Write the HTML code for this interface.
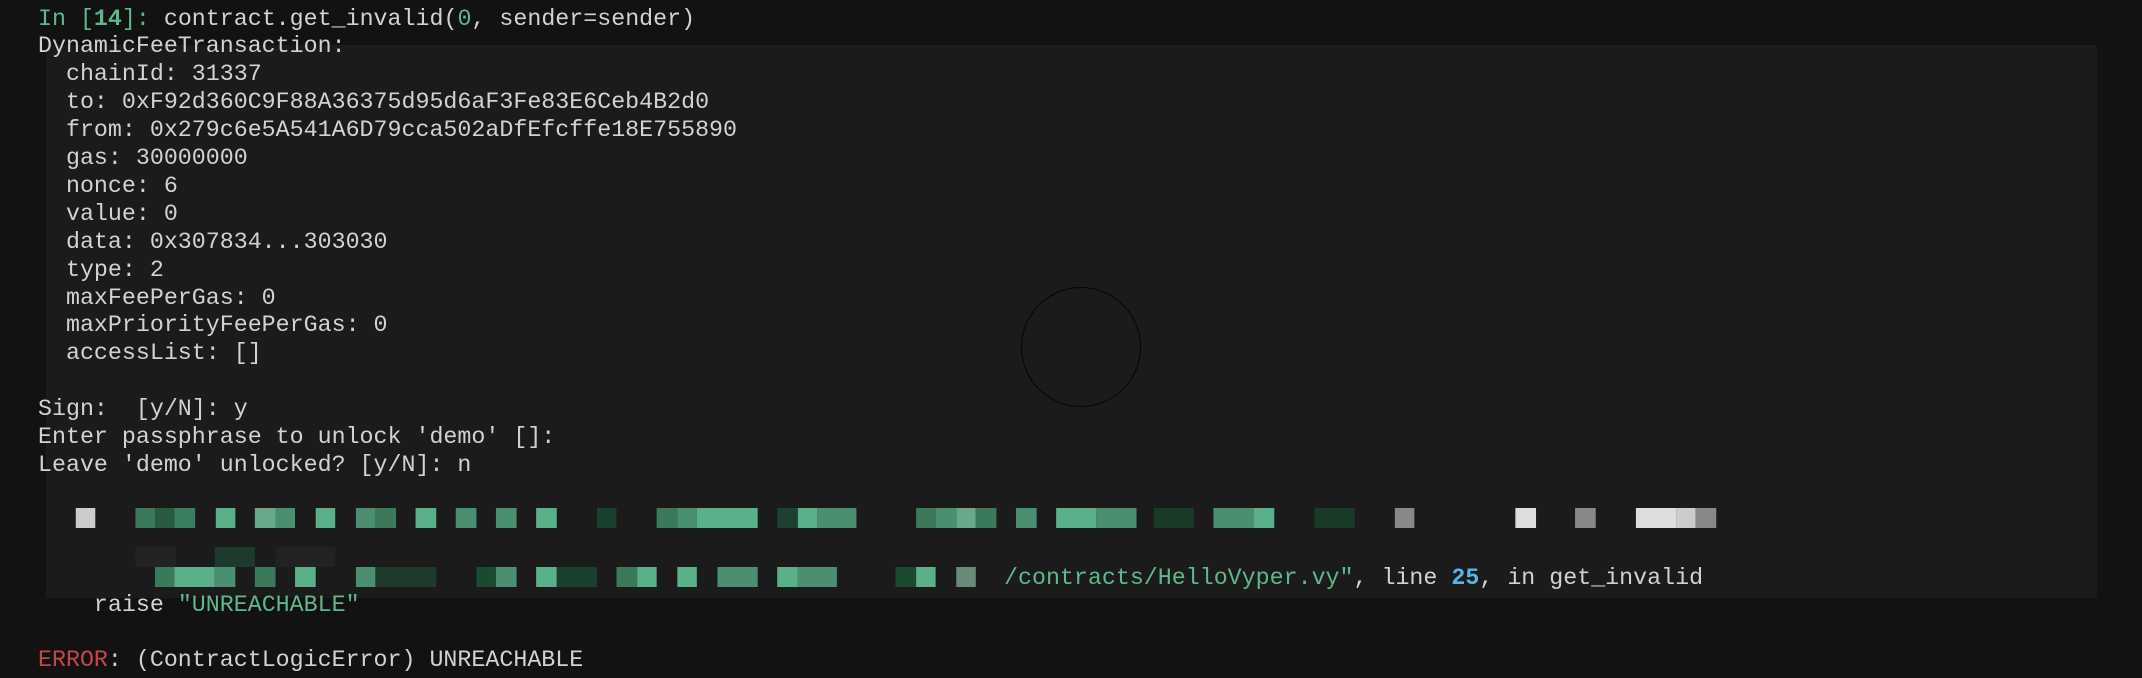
<!DOCTYPE html>
<html><head><meta charset="utf-8"><style>
html,body{margin:0;padding:0;width:2142px;height:678px;overflow:hidden;background:#121212;}
#panel{position:absolute;left:46px;top:45px;width:2051px;height:553px;background:#1b1b1b;}
.l{position:absolute;left:38px;margin:0;font-family:"Liberation Mono","DejaVu Sans Mono",monospace;font-size:23.3px;line-height:27.9px;color:#d2d2d2;white-space:pre;}
.g{color:#5fb88a}.b{color:#5ab4e4}.r{color:#c44848}
#circ{position:absolute;left:1021px;top:287px;width:118px;height:118px;border:1.5px solid #050505;border-radius:50%;}
.row{position:absolute;left:0;height:20px;transform:scaleX(1.148);transform-origin:0 0;width:1600px;}
.row i{position:absolute;top:0;height:20px;}
</style></head><body>
<div id="panel"></div>
<div id="circ"></div>
<div class="l" style="top:5.5px"><span class="g">In [</span><span class="g" style="font-weight:bold">14</span><span class="g">]:</span> contract.get_invalid(<span class="g">0</span>, sender=sender)
DynamicFeeTransaction:
  chainId: 31337
  to: 0xF92d360C9F88A36375d95d6aF3Fe83E6Ceb4B2d0
  from: 0x279c6e5A541A6D79cca502aDfEfcffe18E755890
  gas: 30000000
  nonce: 6
  value: 0
  data: 0x307834...303030
  type: 2
  maxFeePerGas: 0
  maxPriorityFeePerGas: 0
  accessList: []

Sign:  [y/N]: y
Enter passphrase to unlock 'demo' []:
Leave 'demo' unlocked? [y/N]: n
 
 
 
 
    raise <span class="g">"UNREACHABLE"</span>
 
<span class="r">ERROR</span>: (ContractLogicError) UNREACHABLE</div>
<div class="row" style="top:508px">
<i style="left:66px;width:17px;background:#ccc"></i>
<i style="left:118px;width:17px;background:#3a7a5a"></i>
<i style="left:135px;width:17px;background:#2a5a40"></i>
<i style="left:152px;width:18px;background:#3a8060"></i>
<i style="left:188px;width:17px;background:#5ab088"></i>
<i style="left:222px;width:18px;background:#6aa88a"></i>
<i style="left:240px;width:17px;background:#4a9070"></i>
<i style="left:275px;width:17px;background:#5ab088"></i>
<i style="left:310px;width:17px;background:#4a9070"></i>
<i style="left:327px;width:18px;background:#3a7a5a"></i>
<i style="left:362px;width:18px;background:#5ab088"></i>
<i style="left:397px;width:18px;background:#4a9070"></i>
<i style="left:432px;width:18px;background:#4a9070"></i>
<i style="left:467px;width:18px;background:#5ab088"></i>
<i style="left:520px;width:17px;background:#1a4030"></i>
<i style="left:572px;width:18px;background:#3a7a5a"></i>
<i style="left:590px;width:17px;background:#4a9070"></i>
<i style="left:607px;width:53px;background:#5ab088"></i>
<i style="left:677px;width:18px;background:#1e4030"></i>
<i style="left:695px;width:17px;background:#5ab088"></i>
<i style="left:712px;width:34px;background:#4a9070"></i>
<i style="left:798px;width:17px;background:#3a7a5a"></i>
<i style="left:815px;width:18px;background:#4a9070"></i>
<i style="left:833px;width:17px;background:#6aa88a"></i>
<i style="left:850px;width:18px;background:#3a7a5a"></i>
<i style="left:885px;width:18px;background:#4a9070"></i>
<i style="left:920px;width:35px;background:#5ab088"></i>
<i style="left:955px;width:35px;background:#4a9070"></i>
<i style="left:1005px;width:35px;background:#1a3a28"></i>
<i style="left:1057px;width:35px;background:#4a9070"></i>
<i style="left:1092px;width:18px;background:#5ab088"></i>
<i style="left:1145px;width:35px;background:#1a3a28"></i>
<i style="left:1215px;width:17px;background:#888"></i>
<i style="left:1320px;width:18px;background:#ddd"></i>
<i style="left:1372px;width:18px;background:#888"></i>
<i style="left:1425px;width:35px;background:#ddd"></i>
<i style="left:1460px;width:17px;background:#ccc"></i>
<i style="left:1477px;width:18px;background:#888"></i>
</div>
<div class="row" style="top:547px">
<i style="left:118px;width:35px;background:#232323"></i>
<i style="left:187px;width:35px;background:#1e3a2c"></i>
<i style="left:240px;width:52px;background:#222"></i>
</div>
<div class="row" style="top:567px">
<i style="left:135px;width:17px;background:#3a7a5a"></i>
<i style="left:152px;width:35px;background:#5ab088"></i>
<i style="left:187px;width:18px;background:#4a9070"></i>
<i style="left:222px;width:18px;background:#3a7a5a"></i>
<i style="left:257px;width:18px;background:#5ab088"></i>
<i style="left:310px;width:17px;background:#4a9070"></i>
<i style="left:327px;width:53px;background:#1e3a2c"></i>
<i style="left:415px;width:17px;background:#1a4a30"></i>
<i style="left:432px;width:18px;background:#4a9070"></i>
<i style="left:467px;width:18px;background:#5ab088"></i>
<i style="left:485px;width:35px;background:#1a4030"></i>
<i style="left:537px;width:18px;background:#3a7a5a"></i>
<i style="left:555px;width:17px;background:#5ab088"></i>
<i style="left:590px;width:17px;background:#5ab088"></i>
<i style="left:625px;width:35px;background:#4a9070"></i>
<i style="left:677px;width:18px;background:#5ab088"></i>
<i style="left:695px;width:34px;background:#4a9070"></i>
<i style="left:780px;width:18px;background:#1a4a30"></i>
<i style="left:798px;width:17px;background:#5ab088"></i>
<i style="left:833px;width:17px;background:#6a8a7a"></i>
</div>
<div class="l" style="top:564.5px;left:1004px"><span class="g">/contracts/HelloVyper.vy"</span>, line <span class="b" style="font-weight:bold">25</span>, in get_invalid</div>
</body></html>
